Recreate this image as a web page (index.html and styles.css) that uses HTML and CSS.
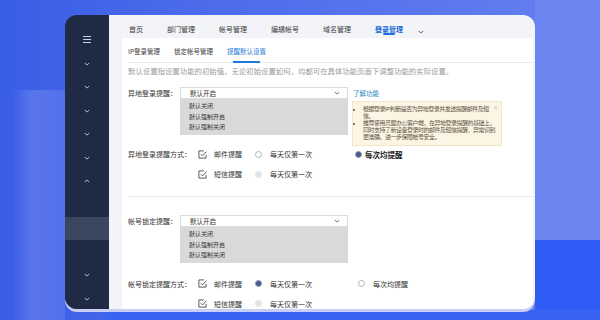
FILE: index.html
```html
<!DOCTYPE html>
<html lang="zh-CN">
<head>
    <meta charset="UTF-8">
    <meta name="viewport" content="width=device-width, initial-scale=1.0">
    <title>登录管理 - 提醒默认设置</title>
    <link rel="stylesheet" href="styles.css">
</head>
<body>
    <div class="window">
        <aside class="sidebar">
            <div class="side-menu">
                <svg width="8" height="7" viewBox="0 0 8 7"><path d="M0 .5h8M0 3.5h8M0 6.5h8" stroke="currentColor" stroke-width="1"/></svg>
            </div>
            <ul class="side-list">
                <li><svg class="chev" viewBox="0 0 8 5"><path d="M1 1l3 3 3-3"/></svg></li>
                <li><svg class="chev" viewBox="0 0 8 5"><path d="M1 1l3 3 3-3"/></svg></li>
                <li><svg class="chev" viewBox="0 0 8 5"><path d="M1 1l3 3 3-3"/></svg></li>
                <li><svg class="chev" viewBox="0 0 8 5"><path d="M1 1l3 3 3-3"/></svg></li>
                <li><svg class="chev" viewBox="0 0 8 5"><path d="M1 1l3 3 3-3"/></svg></li>
                <li><svg class="chev" viewBox="0 0 8 5"><path d="M1 4l3-3 3 3"/></svg></li>
                <li></li>
                <li class="current"></li>
                <li></li>
                <li><svg class="chev" viewBox="0 0 8 5"><path d="M1 1l3 3 3-3"/></svg></li>
                <li><svg class="chev" viewBox="0 0 8 5"><path d="M1 1l3 3 3-3"/></svg></li>
            </ul>
        </aside>

        <div class="main">
            <ul class="top-nav">
                <li>首页</li>
                <li>部门管理</li>
                <li>帐号管理</li>
                <li>编辑帐号</li>
                <li>域名管理</li>
                <li class="active">登录管理</li>
                <li class="more"><svg class="chev" viewBox="0 0 8 5"><path d="M1 1l3 3 3-3"/></svg></li>
            </ul>

            <div class="card">
                <ul class="sub-tabs">
                    <li>IP登录管理</li>
                    <li>锁定帐号管理</li>
                    <li class="active">提醒默认设置</li>
                </ul>

                <p class="desc">默认设置指设置功能的初始值，无论初始设置如何，均都可在具体功能页面下调整功能的实际设置。</p>

                <!-- 异地登录提醒 -->
                <div class="setting first">
                    <div class="setting-row">
                        <span class="field-label">异地登录提醒：</span>
                        <div class="select-wrap">
                            <div class="select">默认开启 <svg class="chev" viewBox="0 0 8 5"><path d="M1 1l3 3 3-3"/></svg></div>
                            <ul class="options">
                                <li>默认关闭</li>
                                <li>默认强制开启</li>
                                <li>默认强制关闭</li>
                            </ul>
                        </div>
                        <div class="help">
                            <a class="help-link">了解功能</a>
                            <div class="notice">
                                <span class="close">×</span>
                                <ul>
                                    <li>根据登录IP判断是否为异地登录并发送提醒邮件及短<br>信。</li>
                                    <li>推荐使用灵犀办公客户端，在异地登录提醒的基础上，<br>同时支持了新设备登录时的邮件及短信提醒，异常识别<br>更准确，进一步保障帐号安全。</li>
                                </ul>
                            </div>
                        </div>
                    </div>
                    <div class="option-row tight">
                        <span class="field-label">异地登录提醒方式：</span>
                        <span class="check"><svg class="box" viewBox="0 0 10 10"><path d="M6.5 1H1v8h8V5.5"/><path d="M3 4.6l2 2L9.4 1.8"/></svg>邮件提醒</span>
                        <span class="radio-opt"><i class="radio"></i>每天仅第一次</span>
                        <span class="radio-opt emph"><i class="radio on"></i>每次均提醒</span>
                    </div>
                    <div class="option-row indent">
                        <span class="check"><svg class="box" viewBox="0 0 10 10"><path d="M6.5 1H1v8h8V5.5"/><path d="M3 4.6l2 2L9.4 1.8"/></svg>短信提醒</span>
                        <span class="radio-opt"><i class="radio off"></i>每天仅第一次</span>
                    </div>
                </div>

                <hr class="divider">

                <!-- 帐号锁定提醒 -->
                <div class="setting second">
                    <div class="setting-row">
                        <span class="field-label">帐号锁定提醒：</span>
                        <div class="select-wrap">
                            <div class="select">默认开启 <svg class="chev" viewBox="0 0 8 5"><path d="M1 1l3 3 3-3"/></svg></div>
                            <ul class="options">
                                <li>默认关闭</li>
                                <li>默认强制开启</li>
                                <li>默认强制关闭</li>
                            </ul>
                        </div>
                    </div>
                    <div class="option-row loose">
                        <span class="field-label">帐号锁定提醒方式：</span>
                        <span class="check"><svg class="box" viewBox="0 0 10 10"><path d="M6.5 1H1v8h8V5.5"/><path d="M3 4.6l2 2L9.4 1.8"/></svg>邮件提醒</span>
                        <span class="radio-opt"><i class="radio on"></i>每天仅第一次</span>
                        <span class="radio-opt shift"><i class="radio"></i>每次均提醒</span>
                    </div>
                    <div class="option-row indent">
                        <span class="check"><svg class="box" viewBox="0 0 10 10"><path d="M6.5 1H1v8h8V5.5"/><path d="M3 4.6l2 2L9.4 1.8"/></svg>短信提醒</span>
                        <span class="radio-opt"><i class="radio off"></i>每天仅第一次</span>
                    </div>
                </div>
            </div>
        </div>
    </div>
</body>
</html>
```

FILE: styles.css
```css
* {
    box-sizing: border-box;
}
body {
    margin: 0;
    width: 600px;
    height: 320px;
    overflow: hidden;
    font-family: "Noto Sans CJK SC", "Noto Sans", sans-serif;
    color: #333;
    background:
        linear-gradient(#3a63f3, #3a63f3) left 105px bottom / 495px 10px no-repeat,
        linear-gradient(#2f5cf5, #2f5cf5) right bottom / 65px 80px no-repeat,
        linear-gradient(#6c85f0, #6c85f0) right top / 65px 240px no-repeat,
        linear-gradient(90deg, rgba(255, 255, 255, 0), rgba(255, 255, 255, 0.14) 20px, rgba(255, 255, 255, 0.1)) left 12px top 90px / 53px 230px no-repeat,
        linear-gradient(90deg, #3a5de6 0%, #4c6ceb 35%, #6580ef 100%);
}
ul {
    list-style: none;
    margin: 0;
    padding: 0;
}
.chev {
    width: 6px;
    height: 4px;
    fill: none;
    stroke: currentColor;
    stroke-width: 1.2;
}

/* window */
.window {
    display: flex;
    width: 470px;
    height: 294px;
    margin: 15px 0 0 65px;
    border-radius: 12px;
    overflow: hidden;
    box-shadow: 0 3px 0 #c8cef4;
}
.sidebar {
    width: 44px;
    flex-shrink: 0;
    background-color: #1f2a45;
    color: #c9cfdc;
}
.side-menu {
    height: 37px;
    padding-top: 15px;
    display: flex;
    justify-content: center;
    align-items: center;
}
.side-menu svg {
    margin-top: -4px;
}
.side-list li {
    height: 23.5px;
    display: flex;
    justify-content: center;
    align-items: center;
}
.side-list li.current {
    background-color: #3a475f;
}

.main {
    flex: 1;
    display: flex;
    flex-direction: column;
    background-color: #f3f4f7;
}
.top-nav {
    display: flex;
    gap: 24px;
    height: 23px;
    padding-left: 20px;
    font-size: 7px;
    color: #3a3a3a;
    flex-shrink: 0;
}
.top-nav li {
    position: relative;
    padding-top: 9px;
    line-height: 10px;
}
.top-nav li.active {
    color: #1e6fd9;
    font-weight: 600;
}
.top-nav li.active::after {
    content: "";
    position: absolute;
    left: 50%;
    top: 18px;
    width: 12px;
    height: 2px;
    margin-left: -6px;
    border-radius: 1px;
    background-color: #1e6fd9;
}
.top-nav li.more {
    margin-left: -9px;
    padding-top: 11px;
    color: #555;
}

/* card */
.card {
    flex: 1;
    margin: 0 2px 0 13px;
    padding-left: 6px;
    background-color: white;
    overflow: hidden;
}
.sub-tabs {
    display: flex;
    gap: 14px;
    height: 25px;
    border-bottom: 1px solid #e9eaee;
    font-size: 6.5px;
    color: #3a3a3a;
}
.sub-tabs li {
    position: relative;
    padding-top: 8px;
    line-height: 10px;
}
.sub-tabs li.active {
    color: #1f7bd9;
}
.sub-tabs li.active::after {
    content: "";
    position: absolute;
    left: 6px;
    right: 6px;
    bottom: -1px;
    height: 2px;
    background-color: #1f7bd9;
}
.desc {
    margin: 2px 0 0;
    font-size: 7.4px;
    line-height: 12px;
    color: #9a9a9a;
    white-space: nowrap;
}

.setting.first {
    margin-top: 10px;
}
.setting.second {
    margin-top: 18px;
}
.setting-row {
    display: flex;
    align-items: flex-start;
}
.field-label {
    width: 52px;
    flex-shrink: 0;
    font-size: 7px;
    line-height: 12px;
    white-space: nowrap;
}
.select-wrap {
    width: 168px;
}
.select {
    height: 12px;
    padding: 0 7px 0 9px;
    display: flex;
    justify-content: space-between;
    align-items: center;
    border: 1px solid #dcdde0;
    background-color: white;
    font-size: 6.5px;
}
.select .chev {
    color: #666;
}
.options {
    padding: 2px 9px 2px;
    background-color: #d9d9d9;
    font-size: 6px;
    line-height: 10.5px;
    color: #333;
}

.help {
    width: 150px;
    margin-left: 4px;
}
.help-link {
    display: block;
    padding-left: 1px;
    font-size: 6.5px;
    line-height: 12px;
    color: #2a8cc0;
}
.notice {
    position: relative;
    margin-top: 2px;
    padding: 4px 5px 4px 2px;
    border: 1px solid #f2e7c8;
    background-color: #fcf5e3;
    font-family: "Liberation Sans", "Noto Sans CJK SC", sans-serif;
    font-size: 6px;
    letter-spacing: -0.5px;
    line-height: 7px;
    color: #5c5346;
}
.notice ul {
    list-style: disc;
    padding-left: 8px;
    white-space: nowrap;
}
.notice .close {
    position: absolute;
    top: 2px;
    right: 4px;
    font-size: 7px;
    line-height: 7px;
    color: #c4bba8;
}

.option-row {
    display: flex;
    align-items: center;
    height: 10px;
    margin-top: 10px;
    font-size: 7px;
    white-space: nowrap;
}
.option-row.tight {
    margin-top: 3px;
}
.option-row.loose {
    margin-top: 16px;
}
.option-row.indent {
    padding-left: 70px;
}
.option-row .field-label {
    width: 70px;
    line-height: 10px;
}
.check {
    width: 57px;
    display: flex;
    align-items: center;
    gap: 7px;
}
.box {
    width: 9px;
    height: 9px;
    fill: none;
    stroke: #4a4a4a;
    stroke-width: 1;
}
.radio-opt {
    width: 100px;
    display: flex;
    align-items: center;
    gap: 8px;
}
.radio-opt.emph {
    gap: 3px;
    font-size: 7.5px;
    font-weight: 600;
    color: #222;
}
.radio-opt.shift {
    margin-left: 3px;
}
.radio {
    width: 7px;
    height: 7px;
    border-radius: 50%;
    border: 1px solid #b4b4b4;
    background-color: white;
}
.radio.on {
    border-color: #8e9abb;
    background-color: #4b5a88;
}
.radio.off {
    border-color: #e4e4e4;
    background-color: #e4e4e4;
}

.divider {
    margin: 17px 1px 0 0;
    border: 0;
    border-top: 1px solid #e8e9ec;
}
```
